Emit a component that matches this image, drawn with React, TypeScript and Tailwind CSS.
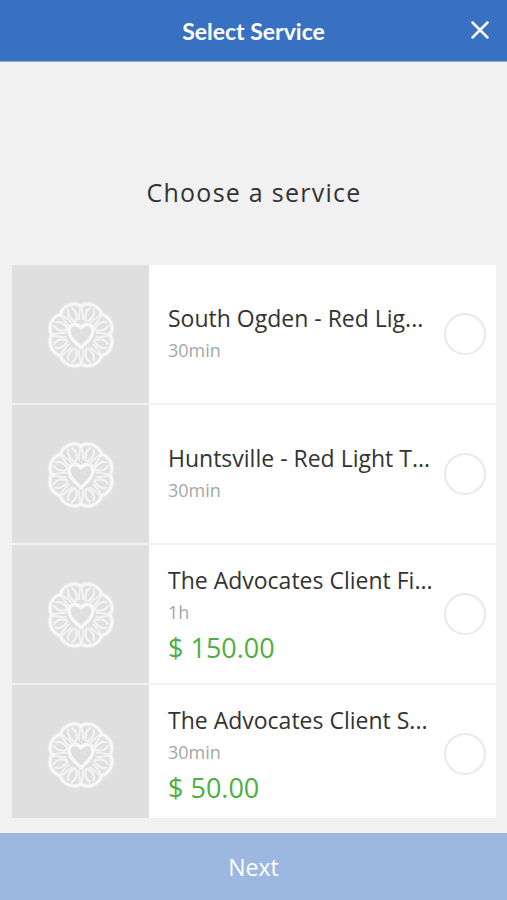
import { X } from "lucide-react";

type Service = { id: string; name: string; duration: string; price?: string };

const services: Service[] = [
  { id: "south-ogden", name: "South Ogden - Red Lig...", duration: "30min" },
  { id: "huntsville", name: "Huntsville - Red Light T...", duration: "30min" },
  { id: "advocates-fi", name: "The Advocates Client Fi...", duration: "1h", price: "$ 150.00" },
  { id: "advocates-s", name: "The Advocates Client S...", duration: "30min", price: "$ 50.00" },
];

const petalAngles = [22.5, 67.5, 112.5, 157.5, 202.5, 247.5, 292.5, 337.5];

function FlowerLogo() {
  return (
    <svg viewBox="-36 -37 72 72" className="size-[72px]" fill="none" stroke="#f8f8f8" strokeLinecap="round" strokeLinejoin="round" aria-hidden="true">
      <g strokeWidth="5" opacity="0.35">
        {petalAngles.map((angle) => (
          <path key={angle} transform={`rotate(${angle})`} d="M-11-27C-6-34 6-34 11-27" />
        ))}
      </g>
      {petalAngles.map((angle) => (
        <g key={angle} transform={`rotate(${angle})`}>
          <path strokeWidth="2.8" d="M-11-27C-6-34 6-34 11-27" />
          <path strokeWidth="2" opacity="0.8" d="M-10-26C-8-22-5-19-4-15M10-26C8-22 5-19 4-15" />
          <path strokeWidth="2.2" opacity="0.85" d="M-1-15C-4-20-5-25-2-28M1-15C4-20 5-25 2-28" />
        </g>
      ))}
      <path strokeWidth="3.4" fill="#dfdfdf" d="M0 13C-3 9-12 4-12-4C-12-12-3-12 0-7C3-12 12-12 12-4C12 4 3 9 0 13Z" />
    </svg>
  );
}

function ServiceRow({ service }: { service: Service }) {
  return (
    <label htmlFor={service.id} className="flex h-[138px] shrink-0 cursor-pointer items-center bg-white">
      <span className="flex h-full w-[137px] shrink-0 items-center justify-center bg-[#dfdfdf]">
        <FlowerLogo />
      </span>
      <span className={service.price ? "flex min-w-0 flex-1 flex-col pt-1 pl-[19px]" : "flex min-w-0 flex-1 flex-col pl-[19px]"}>
        <span className="whitespace-nowrap text-[23px] leading-8 text-[#333333]">{service.name}</span>
        <span className="text-[18px] leading-8 text-[#a3a8a8]">{service.duration}</span>
        {service.price && <span className="text-[27px] leading-10 text-[#4caf3f]">{service.price}</span>}
      </span>
      <input
        type="radio"
        name="service"
        id={service.id}
        className="mr-[10px] size-[42px] shrink-0 cursor-pointer appearance-none rounded-full border-2 border-[#e9e9e9] bg-white checked:border-[#3871c1] checked:bg-[#3871c1]"
      />
    </label>
  );
}

export default function App() {
  return (
    <div className="flex h-screen flex-col bg-[#f1f1f1] font-['Open_Sans','Noto_Sans',sans-serif]">
      <header className="grid h-[62px] shrink-0 grid-cols-[1fr_auto_1fr] items-center border-b border-[#8fb0dd] bg-[#3871c1] text-white">
        <h1 className="col-start-2 font-[Lato,sans-serif] text-[23px] font-bold leading-8">Select Service</h1>
        <button type="button" aria-label="Close" className="mr-3 justify-self-end pb-0.5">
          <X size={30} strokeWidth={2} />
        </button>
      </header>
      <main className="flex min-h-0 flex-1 flex-col pr-[11px] pb-[15px] pl-3">
        <h2 className="pt-[110px] pb-[53px] text-center text-[25px] leading-10 tracking-wider text-[#333333]">Choose a service</h2>
        <div role="radiogroup" aria-label="Choose a service" className="flex min-h-0 flex-1 flex-col gap-[2px] overflow-hidden">
          {services.map((service) => (
            <ServiceRow key={service.id} service={service} />
          ))}
        </div>
      </main>
      <button type="button" className="h-[67px] shrink-0 bg-[#9cb7e0] text-[23px] leading-8 text-white">
        Next
      </button>
    </div>
  );
}
